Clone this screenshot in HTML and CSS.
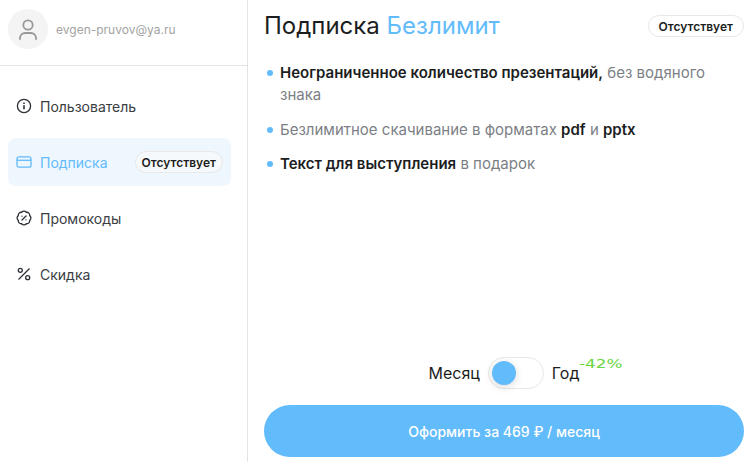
FILE: index.html
```html
<!DOCTYPE html>
<html lang="ru">
<head>
    <meta charset="UTF-8">
    <meta name="viewport" content="width=device-width, initial-scale=1.0">
    <title>Подписка Безлимит</title>
    <link rel="stylesheet" href="styles.css">
</head>
<body>
    <div class="layout">
        <!-- Боковое меню -->
        <aside class="sidebar">
            <div class="profile">
                <div class="avatar">
                    <svg width="24" height="24" viewBox="0 0 24 24" fill="none" stroke="#999" stroke-width="1.800" stroke-linecap="round">
                        <circle cx="12" cy="8" r="4.700"/>
                        <path d="M4 22v-1c0-3 2.500-5 5-5h6c2.500 0 5 2 5 5v1"/>
                    </svg>
                </div>
                <span class="email">evgen-pruvov@ya.ru</span>
            </div>
            <nav class="menu">
                <div class="menu-item">
                    <svg width="16" height="16" viewBox="0 0 16 16" fill="none" stroke="#2b2f36" stroke-width="1.300">
                        <circle cx="8" cy="8" r="6.600"/>
                        <path d="M8 7.300v4" stroke-width="1.600"/>
                        <path d="M8 4.500v1.400" stroke-width="1.600"/>
                    </svg>
                    <span>Пользователь</span>
                </div>
                <div class="menu-item active">
                    <svg width="16" height="16" viewBox="0 0 16 16" fill="none" stroke="#62bbfb" stroke-width="1.300">
                        <rect x="1" y="2.800" width="14" height="10.400" rx="2"/>
                        <path d="M1 6.300h14"/>
                    </svg>
                    <span>Подписка</span>
                    <span class="badge menu-badge">Отсутствует</span>
                </div>
                <div class="menu-item">
                    <svg width="16" height="16" viewBox="0 0 16 16" fill="none" stroke="#2b2f36" stroke-width="1.300" stroke-linecap="round">
                        <path d="M13.730 5.630A3 3 0 0 1 13.730 10.370A3 3 0 0 1 10.370 13.730A3 3 0 0 1 5.630 13.730A3 3 0 0 1 2.270 10.370A3 3 0 0 1 2.270 5.630A3 3 0 0 1 5.630 2.270A3 3 0 0 1 10.370 2.270A3 3 0 0 1 13.730 5.630Z"/>
                        <path d="M6 10l4-4"/>
                        <path d="M6 6.200h.01M10 9.800h.01"/>
                    </svg>
                    <span>Промокоды</span>
                </div>
                <div class="menu-item">
                    <svg width="16" height="16" viewBox="0 0 16 16" fill="none" stroke="#2b2f36" stroke-width="1.300">
                        <path d="M2.500 13.500l11-11"/>
                        <circle cx="4.300" cy="4.300" r="2"/>
                        <circle cx="11.700" cy="11.700" r="2"/>
                    </svg>
                    <span>Скидка</span>
                </div>
            </nav>
        </aside>
        <!-- Контент -->
        <main class="content">
            <header class="content-head">
                <h1 class="title">Подписка <span class="title-accent">Безлимит</span></h1>
                <span class="badge">Отсутствует</span>
            </header>
            <ul class="features">
                <li><b>Неограниченное количество презентаций,</b> без водяного знака</li>
                <li>Безлимитное скачивание в форматах <b>pdf</b> и <b>pptx</b></li>
                <li><b>Текст для выступления</b> в подарок</li>
            </ul>
            <div class="period">
                <span>Месяц</span>
                <div class="switch"><div class="knob"></div></div>
                <span class="year">Год<span class="discount">-42%</span></span>
            </div>
            <button class="buy">Оформить за 469 ₽ / месяц</button>
        </main>
    </div>
</body>
</html>
```

FILE: styles.css
```css
* {
    box-sizing: border-box;
}
html, body {
    height: 100%;
}
body {
    margin: 0;
    background-color: #fff;
    color: #1b1d21;
    font-family: "Inter", "Liberation Sans", sans-serif;
    overflow: hidden;
}
.layout {
    display: flex;
    height: 462px;
}
.sidebar {
    width: 248px;
    flex-shrink: 0;
    border-right: 1px solid #e3e3e3;
}
.profile {
    display: flex;
    align-items: center;
    gap: 8px;
    height: 66px;
    padding: 0 8px 7px;
    border-bottom: 1px solid #e3e3e3;
}
.avatar {
    display: flex;
    align-items: center;
    justify-content: center;
    width: 40px;
    height: 40px;
    border-radius: 50%;
    background-color: #f4f4f4;
}
.email {
    font-size: 12px;
    color: #a3a3a3;
}
.menu {
    display: flex;
    flex-direction: column;
    gap: 8px;
    padding: 16px 16px 0 8px;
}
.menu-item {
    display: flex;
    align-items: center;
    gap: 8px;
    height: 48px;
    padding: 0 8px;
    border-radius: 8px;
    font-size: 14px;
    color: #3a3d42;
}
.menu-item.active {
    background-color: #eff7fe;
    color: #62bbfb;
}
.badge {
    display: inline-flex;
    align-items: center;
    height: 22px;
    padding: 0 10px;
    border: 1px solid #e8e8e8;
    border-radius: 11px;
    background-color: #fff;
    color: #1b1d21;
    font-size: 12px;
    font-weight: 600;
}
.menu-badge {
    margin-left: auto;
    padding: 0 6px;
    background-color: #f6f9fc;
}
.content {
    flex: 1;
    display: flex;
    flex-direction: column;
    padding: 11px 11px 5px 16px;
}
.content-head {
    display: flex;
    align-items: center;
    justify-content: space-between;
}
.title {
    margin: 0;
    font-size: 24px;
    font-weight: 400;
    line-height: 30px;
}
.title-accent {
    color: #62bbfb;
}
.features {
    flex: 1;
    margin: 21px 0 0;
    padding: 0;
    list-style: none;
    font-size: 15px;
    line-height: 22px;
    color: #7c7f85;
}
.features li {
    position: relative;
    padding-left: 16px;
    margin-bottom: 12.500px;
}
.features li::before {
    content: "";
    position: absolute;
    left: 3px;
    top: 8px;
    width: 6px;
    height: 6px;
    border-radius: 50%;
    background-color: #62bbfb;
}
.features b {
    font-weight: 600;
    color: #1b1d21;
}
.period {
    display: flex;
    align-items: center;
    justify-content: center;
    gap: 8px;
    font-size: 16px;
    margin-bottom: 16px;
}
.switch {
    display: flex;
    align-items: center;
    width: 56px;
    height: 32px;
    padding: 0 3px;
    border: 1px solid #e8e8e8;
    border-radius: 16px;
    background-color: #fff;
}
.knob {
    width: 24px;
    height: 24px;
    border-radius: 50%;
    background-color: #62bbfb;
    box-shadow: 0 2px 8px rgba(0, 0, 0, 0.15);
}
.year {
    position: relative;
}
.discount {
    position: absolute;
    left: 100%;
    top: -6px;
    margin-left: -1px;
    font-family: "DejaVu Sans", sans-serif;
    font-size: 12px;
    color: #68d53d;
    white-space: nowrap;
    transform: scaleX(1.400);
    transform-origin: left center;
}
.buy {
    height: 52px;
    border: none;
    border-radius: 26px;
    background-color: #62bbfb;
    color: #fff;
    font-family: inherit;
    font-size: 14px;
    font-weight: 550;
}
```
